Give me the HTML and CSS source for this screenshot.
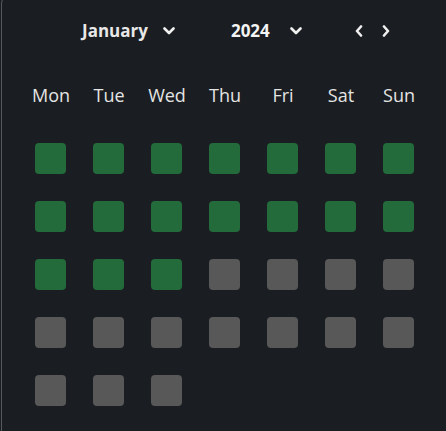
FILE: index.html
```html
<!DOCTYPE html>
<html lang="en">
<head>
  <meta charset="UTF-8" />
  <meta name="viewport" content="width=device-width, initial-scale=1.0"/>
  <title>Calendar</title>
  <link rel="stylesheet" href="styles.css">
</head>
<body>
  <div class="container">
    <div class="header">
      <div class="select month">
        <span>January</span>
        <svg class="chev" width="12" height="8" viewBox="0 0 12 8"><polyline points="1.5,1.5 6,6 10.5,1.5" /></svg>
      </div>
      <div class="select year">
        <span>2024</span>
        <svg class="chev" width="12" height="8" viewBox="0 0 12 8"><polyline points="1.5,1.5 6,6 10.5,1.5" /></svg>
      </div>
      <div class="nav">
        <svg class="arrow" width="8" height="12" viewBox="0 0 8 12"><polyline points="6,1.5 2,6 6,10.5" /></svg>
        <svg class="arrow" width="8" height="12" viewBox="0 0 8 12"><polyline points="2,1.5 6,6 2,10.5" /></svg>
      </div>
    </div>
    <div class="week">
      <div class="day">Mon</div>
      <div class="day">Tue</div>
      <div class="day">Wed</div>
      <div class="day">Thu</div>
      <div class="day">Fri</div>
      <div class="day">Sat</div>
      <div class="day">Sun</div>
    </div>
    <div class="grid">
      <div class="cell on"></div><div class="cell on"></div><div class="cell on"></div><div class="cell on"></div><div class="cell on"></div><div class="cell on"></div><div class="cell on"></div>
      <div class="cell on"></div><div class="cell on"></div><div class="cell on"></div><div class="cell on"></div><div class="cell on"></div><div class="cell on"></div><div class="cell on"></div>
      <div class="cell on"></div><div class="cell on"></div><div class="cell on"></div><div class="cell"></div><div class="cell"></div><div class="cell"></div><div class="cell"></div>
      <div class="cell"></div><div class="cell"></div><div class="cell"></div><div class="cell"></div><div class="cell"></div><div class="cell"></div><div class="cell"></div>
      <div class="cell"></div><div class="cell"></div><div class="cell"></div>
    </div>
  </div>
</body>
</html>
```

FILE: styles.css
```css
* {
  margin: 0;
  padding: 0;
  box-sizing: border-box;
}
body {
  background-color: #1a1d21;
  overflow: hidden;
  font-family: "Open Sans", "DejaVu Sans", sans-serif;
}
.container {
  width: 445px;
  height: 440px;
  margin: -6px 0 0 1px;
  padding-top: 24px;
  border: 1px solid #55585c;
  border-right: none;
  border-bottom: none;
  border-radius: 10px 0 0 0;
  background-color: #1a1d21;
}
.header {
  display: flex;
  align-items: center;
  height: 24px;
  padding-left: 80px;
  font-size: 17px;
  font-weight: 700;
  line-height: 24px;
  color: #e8e8e8;
}
.select {
  display: flex;
  align-items: center;
}
.month span {
  margin-right: 15px;
}
.year span {
  margin-right: 20px;
}
.month {
  margin-right: 56px;
}
.year {
  margin-right: 53px;
  color: #f4f4f4;
}
.chev polyline,
.arrow polyline {
  fill: none;
  stroke: #f0f0f0;
  stroke-width: 2.6;
  stroke-linecap: round;
  stroke-linejoin: round;
}
.nav {
  display: flex;
  gap: 19px;
}
.week {
  display: grid;
  grid-template-columns: repeat(7, 58px);
  margin-top: 40px;
  padding-left: 20px;
  font-size: 18px;
  line-height: 24px;
  color: #e4e4e4;
}
.day {
  text-align: center;
}
.grid {
  display: grid;
  grid-template-columns: repeat(7, 31px);
  column-gap: 27px;
  row-gap: 27px;
  margin-top: 36px;
  padding-left: 33px;
}
.cell {
  width: 31px;
  height: 31px;
  border-radius: 4px;
  background-color: #585858;
}
.cell.on {
  background-color: #236b3a;
}
```
